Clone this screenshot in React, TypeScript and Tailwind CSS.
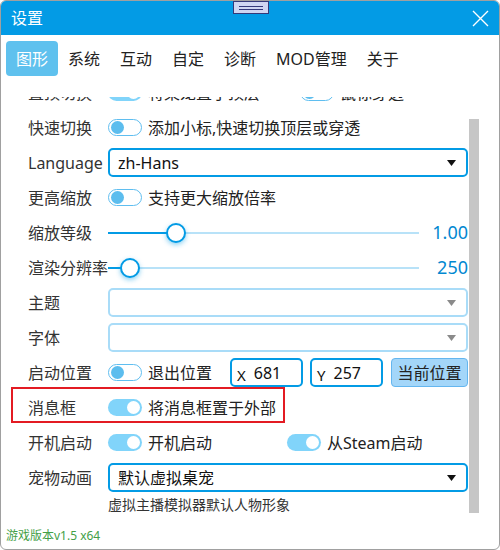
import React from 'react';

const FONT = "font-['Noto_Sans','Noto_Sans_CJK_SC',sans-serif]";

const Toggle: React.FC<{ on?: boolean }> = ({ on }) =>
  on ? (
    <span className="flex h-[17px] w-[34px] shrink-0 items-center justify-end rounded-full bg-[#81d4fa] pr-[2px]">
      <span className="h-[13px] w-[13px] rounded-full bg-white" />
    </span>
  ) : (
    <span className="flex h-[17px] w-[34px] shrink-0 items-center rounded-full border border-[#5fbef0] bg-white pl-[2px]">
      <span className="h-[13px] w-[13px] rounded-full bg-[#5cbdee]" />
    </span>
  );

const Row: React.FC<{ label: string; children?: React.ReactNode; className?: string }> = ({
  label,
  children,
  className,
}) => (
  <div className={`relative flex h-[35px] shrink-0 items-center ${className ?? ''}`}>
    <span className="w-[80px] shrink-0 whitespace-nowrap text-[16px] text-[#333]">{label}</span>
    {children}
  </div>
);

const ToggleText: React.FC<{ on?: boolean; text: string }> = ({ on, text }) => (
  <div className="flex items-center gap-[6px]">
    <Toggle on={on} />
    <span className="whitespace-nowrap text-[16px] text-[#222]">{text}</span>
  </div>
);

const Select: React.FC<{ value?: string; strong?: boolean }> = ({ value, strong }) => (
  <div
    className={`flex h-[29px] flex-1 items-center justify-between rounded-[5px] border-2 pl-[8px] pr-[10px] ${
      strong ? 'border-[#039be5]' : 'border-[#a9dcf8]'
    }`}
  >
    <span className="text-[16px] text-[#111]">{value}</span>
    <svg width="9" height="6" viewBox="0 0 9 6">
      <path d="M0 0h9L4.5 6z" fill={strong ? '#111' : '#8a8a8a'} />
    </svg>
  </div>
);

const Slider: React.FC<{ pct: number; value: string }> = ({ pct, value }) => (
  <div className="flex flex-1 items-center">
    <div className="relative flex h-[20px] w-[311px] items-center">
      <div className="flex h-[2px] w-full">
        <div className="h-full bg-[#039be5]" style={{ width: `${pct}%` }} />
        <div className="h-full flex-1 bg-[#b8e2f8]" />
      </div>
      <span
        className="absolute top-0 h-[20px] w-[20px] -translate-x-1/2 rounded-full border-2 border-[#039be5] bg-white shadow-[0_2px_5px_rgba(3,155,229,0.45)]"
        style={{ left: `${pct}%` }}
      />
    </div>
    <span className="ml-auto text-[18px] text-[#0288d1]">{value}</span>
  </div>
);

const CoordBox: React.FC<{ axis: string; value: string }> = ({ axis, value }) => (
  <div className="flex h-[29px] w-[73px] items-center rounded-[5px] border-2 border-[#039be5] pl-[5px]">
    <span className="mt-[5px] text-[15px] text-[#111]">{axis}</span>
    <span className="ml-[8px] text-[16px] text-[#111]">{value}</span>
  </div>
);

const tabs = ['图形', '系统', '互动', '自定', '诊断', 'MOD管理', '关于'];

export default function App() {
  return (
    <div
      className={`${FONT} relative flex h-[550px] w-[500px] flex-col overflow-hidden rounded-[6px] border border-[#a0a0a0] bg-white`}
    >
      <div className="flex h-[34px] shrink-0 items-center justify-between bg-[#039be5] pl-[10px] pr-[10px]">
        <span className="text-[16px] text-white">设置</span>
        <svg width="17" height="17" viewBox="0 0 17 17">
          <path d="M1 1L16 16M16 1L1 16" stroke="white" strokeWidth="1.4" />
        </svg>
      </div>
      <div className="absolute left-[232px] top-0 flex h-[13px] w-[36px] flex-col items-center justify-center gap-[2px] border border-[#34397a] bg-[#cfd6f2]">
        <span className="h-[1px] w-[24px] bg-[#34397a]" />
        <span className="h-[1px] w-[24px] bg-[#34397a]" />
      </div>

      <div className="flex h-[62px] shrink-0 items-start pl-[5px] pt-[6px]">
        {tabs.map((t, i) => (
          <span
            key={t}
            className={`flex h-[35px] items-center px-[10px] text-[16px] ${
              i === 0 ? 'rounded-[4px] bg-[#5fc1ee] text-white' : 'text-[#222]'
            }`}
          >
            {t}
          </span>
        ))}
      </div>

      <div className="flex h-[420px] shrink-0">
        <div className="flex w-[468px] flex-col overflow-hidden pl-[27px] pr-[1px]">
          <div className="-mt-[22px] flex flex-col">
            <Row label="置顶切换">
              <ToggleText on text="将桌宠置于顶层" />
              <span className="ml-[40px]">
                <ToggleText text="鼠标穿透" />
              </span>
            </Row>
            <Row label="快速切换">
              <ToggleText text="添加小标,快速切换顶层或穿透" />
            </Row>
            <Row label="Language">
              <Select value="zh-Hans" strong />
            </Row>
            <Row label="更高缩放">
              <ToggleText text="支持更大缩放倍率" />
            </Row>
            <Row label="缩放等级">
              <Slider pct={22} value="1.00" />
            </Row>
            <Row label="渲染分辨率">
              <Slider pct={7} value="250" />
            </Row>
            <Row label="主题">
              <Select />
            </Row>
            <Row label="字体">
              <Select />
            </Row>
            <Row label="启动位置">
              <ToggleText text="退出位置" />
              <div className="ml-auto flex items-center gap-[7px]">
                <CoordBox axis="X" value="681" />
                <CoordBox axis="Y" value="257" />
                <span className="ml-[1px] flex h-[29px] w-[77px] items-center justify-center rounded-[4px] border border-[#64b6ef] bg-[#a3d6f9] text-[16px] text-[#222]">
                  当前位置
                </span>
              </div>
            </Row>
            <Row label="消息框">
              <ToggleText on text="将消息框置于外部" />
              <span className="pointer-events-none absolute -left-[17px] -top-[3px] h-[36px] w-[274px] border-2 border-[#e31b23]" />
            </Row>
            <Row label="开机启动">
              <ToggleText on text="开机启动" />
              <span className="ml-[75px]">
                <ToggleText on text="从Steam启动" />
              </span>
            </Row>
            <Row label="宠物动画">
              <Select value="默认虚拟桌宠" strong />
            </Row>
            <p className="pl-[80px] text-[14px] leading-[20px] text-[#333]">虚拟主播模拟器默认人物形象</p>
          </div>
        </div>
        <div className="w-[10px] shrink-0">
          <div className="mt-[22px] h-[394px] w-full bg-[#c6c6c6]" />
        </div>
      </div>

      <div className="flex flex-1 items-end pb-[4px] pl-[5px]">
        <span className="text-[12px] text-[#43a047]">游戏版本v1.5 x64</span>
      </div>
    </div>
  );
}
